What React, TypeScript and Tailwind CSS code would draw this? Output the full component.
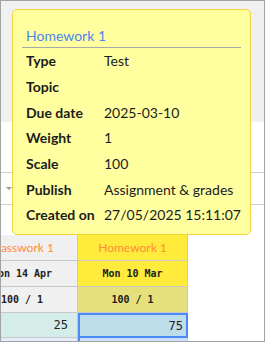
import React from "react";

const rows: [string, string][] = [
  ["Type", "Test"],
  ["Topic", ""],
  ["Due date", "2025-03-10"],
  ["Weight", "1"],
  ["Scale", "100"],
  ["Publish", "Assignment & grades"],
  ["Created on", "27/05/2025 15:11:07"],
];

export default function App() {
  return (
    <div className="w-[265px] h-[342px] relative overflow-hidden border border-[#a3a3a3] bg-white font-['Lato',sans-serif]">
      <div className="h-[121px] bg-[#f0f0f0]" />
      <div className="h-[51px] border-b border-[#d0d0d0]" />
      <div className="h-[32px] border-b border-[#d0d0d0] flex items-center pl-[5px]">
        <div className="w-0 h-0 border-l-[3px] border-r-[3px] border-t-[3px] border-l-transparent border-r-transparent border-t-[#9a9a9a]" />
      </div>
      <div className="h-[30px]" />
      {/* table */}
      <div className="flex flex-col ml-[-34px]">
        <div className="flex h-[26px] text-[12px] text-[#ff8a3d]">
          <div className="w-[111px] border-r border-b border-[#c8c8c8] bg-[#f0f0f0] flex items-center justify-center">Classwork 1</div>
          <div className="w-[110px] border-r border-b border-[#c8c8c8] bg-[#ffeb3b] flex items-center justify-center">Homework 1</div>
        </div>
        <div className="flex h-[26px] text-[10px] font-bold font-['DejaVu_Sans_Mono',monospace] text-[#222]">
          <div className="w-[111px] border-r border-b border-[#c8c8c8] bg-[#f0f0f0] flex items-center justify-center">Mon 14 Apr</div>
          <div className="w-[110px] border-r border-b border-[#c8c8c8] bg-[#ffeb3b] flex items-center justify-center">Mon 10 Mar</div>
        </div>
        <div className="flex h-[26px] text-[10px] font-bold font-['DejaVu_Sans_Mono',monospace] text-[#222]">
          <div className="w-[111px] border-r border-b border-[#c8c8c8] bg-[#f0f0f0] flex items-center justify-center">100 / 1</div>
          <div className="w-[110px] border-r border-b border-[#c8c8c8] bg-[#e6e07c] flex items-center justify-center">100 / 1</div>
        </div>
        <div className="flex h-[25px] text-[12px] font-['DejaVu_Sans_Mono',monospace] text-[#222]">
          <div className="w-[111px] border-r border-b border-[#c8c8c8] bg-[#d5ede9] flex items-center justify-end pr-[9px]">25</div>
          <div className="w-[110px] border-2 border-[#4a8af4] bg-[#bcdde9] flex items-center justify-end pr-[3px]">75</div>
        </div>
        <div className="flex h-[20px]">
          <div className="w-[111px] border-r border-[#c8c8c8] bg-[#e3ecf9]" />
          <div className="w-[110px] border-r border-l-2 border-l-[#4a8af4] border-[#c8c8c8] bg-[#cfe0fa]" />
        </div>
      </div>

      {/* tooltip */}
      <div className="absolute left-[11px] top-[8px] w-[239px] h-[226px] bg-[#ffffa0] border border-[#f0d43c] rounded-[5px] px-[9px] pt-[17px] text-[#1c1c1c]">
        <div className="pl-[4px] pb-[2px] text-[14px] leading-[18px] text-[#4a86f0] border-b border-[#a8a8a8]">
          Homework 1
        </div>
        <div className="flex flex-col">
          {rows.map(([k, v]) => (
            <div key={k} className="grid grid-cols-[82px_1fr] h-[25.7px] items-center text-[14px]">
              <div className="pl-[4px] font-bold">{k}</div>
              <div>{v}</div>
            </div>
          ))}
        </div>
      </div>
    </div>
  );
}
